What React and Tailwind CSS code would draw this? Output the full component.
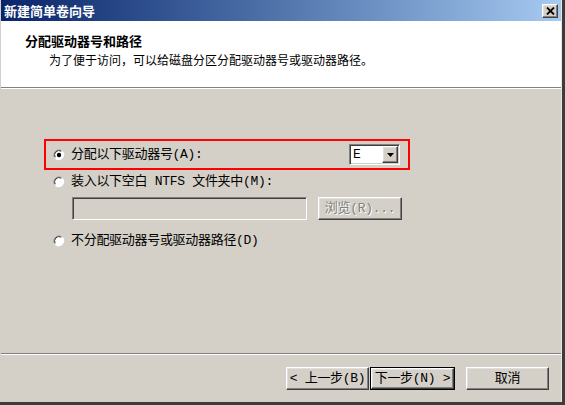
const FONT = "font-['Liberation_Mono','Noto_Sans_CJK_SC',monospace]"
const CJK = "font-['Noto_Sans_CJK_SC','Liberation_Sans',sans-serif]"

// Classic Win9x/2000 bevels
const RAISED = 'border border-t-white border-l-white border-r-[#404040] border-b-[#404040] shadow-[inset_-1px_-1px_0_#808080,inset_1px_1px_0_#dfdfdf]'
const SUNKEN = 'border border-t-[#808080] border-l-[#808080] border-r-white border-b-white shadow-[inset_1px_1px_0_#404040,inset_-1px_-1px_0_#d4d0c8]'

function Radio({ checked }) {
  return (
    <svg width="12" height="12" viewBox="0 0 12 12" className="shrink-0">
      <path d="M8 1.5A5 5 0 0 0 1.5 8" fill="none" stroke="#808080" strokeWidth="1.2" />
      <circle cx="6" cy="6" r="4.6" fill="white" stroke="none" />
      <path d="M9.5 2.5A5 5 0 0 1 2.5 9.5" fill="none" stroke="#ffffff" strokeWidth="1.2" />
      <path d="M8.2 2.2A4.4 4.4 0 0 0 2.2 8.2" fill="none" stroke="#404040" strokeWidth="1" />
      {checked && <circle cx="6" cy="6" r="2.2" fill="black" />}
    </svg>
  )
}

function Button({ children, isDefault, disabled, className = '' }) {
  const inner = (
    <div className={`flex h-full w-full items-center justify-center whitespace-nowrap bg-[#d4d0c8] text-[13px] tracking-[-0.3px] ${RAISED} ${disabled ? 'text-[#808080] [text-shadow:1px_1px_0_#ffffff]' : 'text-black'}`}>
      {children}
    </div>
  )
  if (isDefault) return <div className={`border border-black ${className}`}>{inner}</div>
  return <div className={className}>{inner}</div>
}

export default function App() {
  return (
    <div className={`flex h-[405px] w-[565px] flex-col overflow-hidden bg-[#3c3c3c] ${FONT}`}>
      <div className="flex h-[402px] w-[562px] flex-col border-l border-[#d4d0c8] border-r border-r-[#e8e6e2] bg-[#d4d0c8]">
        {/* title bar */}
        <div className="flex h-[21px] shrink-0 items-center bg-gradient-to-r from-[#0a246a] to-[#a6caf0] pl-[3px] pr-[3px]">
          <span className={`text-[13px] font-bold leading-none text-white ${CJK}`}>新建简单卷向导</span>
          <div className={`ml-auto flex h-[14px] w-[16px] items-center justify-center bg-[#d4d0c8] ${RAISED}`}>
            <svg width="9" height="8" viewBox="0 0 9 8">
              <path d="M1 0.5L8 7.5M8 0.5L1 7.5" stroke="black" strokeWidth="1.8" />
            </svg>
          </div>
        </div>

        {/* header */}
        <div className={`h-[66px] shrink-0 bg-white pl-[24px] pt-[12px] ${CJK}`}>
          <div className="text-[13px] font-bold leading-[16px] text-black">分配驱动器号和路径</div>
          <div className="mt-[3px] pl-[24px] text-[12px] leading-[16px] text-black">为了便于访问，可以给磁盘分区分配驱动器号或驱动器路径。</div>
        </div>
        <div className="h-px shrink-0 bg-[#808080]" />
        <div className="h-px shrink-0 bg-white" />

        {/* body */}
        <div className="h-[264px] shrink-0 pt-[50px] text-[13px] text-black">
          <div className="ml-[43px] flex h-[31px] w-[366px] items-center border-2 border-[#ff0000] pl-[7px] pr-[8px]">
            <Radio checked />
            <span className="ml-[6px] tracking-[-0.3px]">分配以下驱动器号(A):</span>
            <div className={`ml-auto flex h-[21px] w-[51px] bg-white ${SUNKEN}`}>
              <span className="flex-1 pl-[3px] text-[13px] leading-[19px]">E</span>
              <div className={`m-[1px] flex w-[16px] items-center justify-center bg-[#d4d0c8] ${RAISED}`}>
                <svg width="7" height="4" viewBox="0 0 7 4"><path d="M0 0H7L3.5 4Z" fill="black" /></svg>
              </div>
            </div>
          </div>

          <div className="ml-[52px] flex h-[24px] items-center">
            <Radio />
            <span className="ml-[6px] tracking-[-0.3px]">装入以下空白 NTFS 文件夹中(M):</span>
          </div>
          <div className="ml-[71px] mt-[3px] flex items-center">
            <div className={`h-[23px] w-[235px] bg-[#d4d0c8] ${SUNKEN}`} />
            <Button disabled className="ml-[11px] h-[23px] w-[84px]">浏览(R)...</Button>
          </div>
          <div className="ml-[52px] mt-[9px] flex h-[24px] items-center">
            <Radio />
            <span className="ml-[6px] tracking-[-0.3px]">不分配驱动器号或驱动器路径(D)</span>
          </div>
        </div>

        <div className="h-px shrink-0 bg-[#808080]" />
        <div className="h-px shrink-0 bg-white" />

        {/* footer */}
        <div className="flex flex-1 items-start pt-[12px]">
          <Button className="ml-[285px] h-[23px] w-[83px]">&lt; 上一步(B)</Button>
          <Button isDefault className="ml-px h-[23px] w-[85px]">下一步(N) &gt;</Button>
          <Button className="ml-[11px] h-[23px] w-[83px]">取消</Button>
        </div>
      </div>
    </div>
  )
}
